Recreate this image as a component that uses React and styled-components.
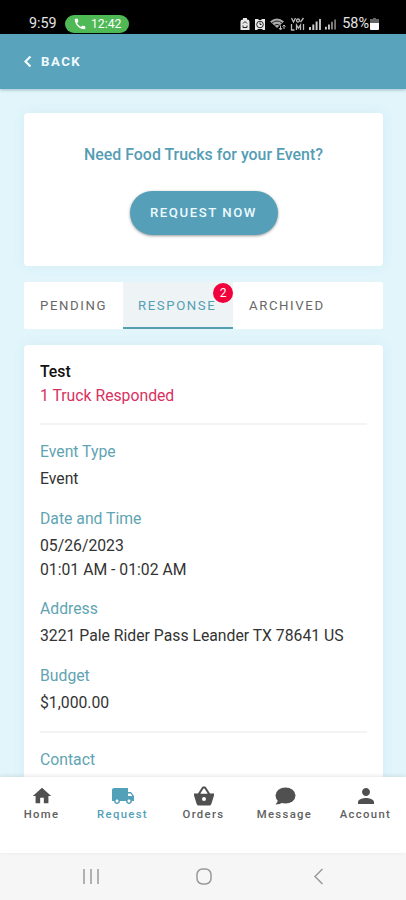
import React from 'react';
import styled, { createGlobalStyle } from 'styled-components';
import { MdHome, MdLocalShipping, MdPerson, MdCall } from 'react-icons/md';

const GlobalStyle = createGlobalStyle`
  * {
    box-sizing: border-box;
  }
  body {
    margin: 0;
    background: #e1f5fb;
    font-family: Roboto, sans-serif;
  }
`;

const Screen = styled.div`
  display: flex;
  flex-direction: column;
  width: 406px;
  height: 900px;
  overflow: hidden;
  background: #e1f5fb;
`;

const StatusBar = styled.div`
  display: flex;
  align-items: flex-end;
  flex: 0 0 34px;
  padding: 0 27px 2px 29px;
  background: #000;
  color: #e4e4e4;
`;

const Clock = styled.span`
  width: 36px;
  font-size: 14.3px;
  line-height: 17px;
`;

const CallPill = styled.div`
  display: flex;
  align-items: center;
  gap: 4px;
  width: 64px;
  height: 18px;
  margin-bottom: -1px;
  padding-left: 8px;
  border-radius: 9px;
  background: #4fb955;
  color: #fff;
  font-size: 12.2px;
  white-space: nowrap;
`;

const StatusIcons = styled.div`
  display: flex;
  align-items: center;
  gap: 4px;
  margin-left: auto;
  height: 17px;

  svg {
    flex: none;
  }
`;

const Battery = styled.span`
  display: flex;
  align-items: center;
  gap: 1px;
  margin-left: 2px;
  font-size: 14.4px;
`;

const Header = styled.div`
  position: relative;
  z-index: 1;
  display: flex;
  align-items: center;
  gap: 9px;
  flex: 0 0 55px;
  padding-left: 23px;
  background: #5aa3bd;
  box-shadow: 0 1px 3px rgba(40, 90, 110, 0.35);
  color: #f0fbff;
  font-size: 13.2px;
  font-weight: 700;
  letter-spacing: 1.5px;
`;

const Content = styled.div`
  flex: 1;
  min-height: 0;
  overflow: hidden;
  padding: 24px 23px 0 24px;
`;

const Card = styled.div`
  border-radius: 4px;
  background: #fff;
  box-shadow: 0 0 12px rgba(120, 190, 200, 0.12);
`;

const PromoCard = styled(Card)`
  display: flex;
  flex-direction: column;
  align-items: center;
  height: 153px;
  padding-top: 31px;
`;

const PromoTitle = styled.div`
  color: #559db4;
  font-size: 15.9px;
  font-weight: 500;
  line-height: 22px;
`;

const RequestButton = styled.button`
  width: 148px;
  height: 44px;
  margin-top: 25px;
  padding: 0 0 1px;
  border: none;
  border-radius: 22px;
  background: #559fb9;
  box-shadow: 0 1px 3px rgba(0, 0, 0, 0.4);
  color: #edfaff;
  font-family: inherit;
  font-size: 13.2px;
  font-weight: 500;
  letter-spacing: 1.55px;
`;

const Tabs = styled.div`
  display: flex;
  height: 47px;
  margin-top: 16px;
  border-radius: 2px;
  background: #fff;
`;

const Tab = styled.div`
  position: relative;
  width: ${props => props.$width}px;
  padding-left: ${props => (props.$active ? 15 : 16)}px;
  border-bottom: 2px solid ${props => (props.$active ? '#559fb3' : 'transparent')};
  background: ${props => (props.$active ? '#eef3f5' : 'transparent')};
  color: ${props => (props.$active ? '#559fb3' : '#676767')};
  font-size: 13.2px;
  line-height: 48px;
  letter-spacing: 1.6px;
`;

const Badge = styled.span`
  position: absolute;
  top: 1px;
  right: 0;
  width: 20px;
  height: 20px;
  border-radius: 50%;
  background: #f2003c;
  color: #fff;
  font-size: 12px;
  line-height: 20px;
  letter-spacing: 0;
  text-align: center;
`;

const DetailCard = styled(Card)`
  height: 500px;
  margin-top: 16px;
  padding: 15px 16px 0;
  font-size: 15.75px;
  line-height: 24px;
  color: #333;
`;

const Title = styled.div`
  color: #111;
  font-weight: 500;
`;

const Responded = styled.div`
  color: #d8315f;
`;

const Divider = styled.div`
  height: 2px;
  margin: 15px 0;
  background: #f4f4f4;
`;

const Field = styled.div`
  margin-bottom: 15.7px;
`;

const Label = styled.div`
  margin-bottom: 3px;
  color: #5fa4b2;
`;

const BottomNav = styled.div`
  position: relative;
  display: grid;
  grid-template-columns: repeat(5, 1fr);
  flex: 0 0 76px;
  padding: 8px 0 0 1px;
  background: #fff;
  box-shadow: 0 -1px 4px rgba(0, 0, 0, 0.1);
`;

const NavItem = styled.div`
  display: flex;
  flex-direction: column;
  align-items: center;
  color: ${props => (props.$active ? '#52a1b9' : '#606060')};
  font-size: 11.3px;
  font-weight: 500;
  line-height: 15px;
  letter-spacing: 1.35px;
`;

const NavIcon = styled.div`
  display: flex;
  align-items: center;
  justify-content: center;
  height: 22px;
  color: ${props => (props.$active ? '#52a1b9' : '#505050')};
`;

const SystemNav = styled.div`
  display: flex;
  align-items: center;
  flex: 0 0 47px;
  padding-left: 82px;
  gap: 95px;
  background: #f6f6f6;
`;

const BatterySaverIcon = () => (
  <svg width="10" height="14" viewBox="0 0 10 14">
    <path d="M3 1h4v1.500q2.500 0 2.500 2V13h-9V4.500q0-2 2.500-2z" fill="#e8e8e8" />
    <path d="M3 6.500l2-2 2 2M3 8.500v2h4v-2" fill="none" stroke="#222" />
  </svg>
);

const AlarmIcon = () => (
  <svg width="12" height="14" viewBox="0 0 12 14">
    <path d="M1 2h3l1 1h2l1-1h3v11H9l-1-1H4l-1 1H1z" fill="#e8e8e8" />
    <circle cx="6" cy="7.500" r="3.300" fill="none" stroke="#222" />
    <path d="M6 5.500v2h1.500" fill="none" stroke="#222" />
  </svg>
);

const WifiIcon = () => (
  <svg width="16" height="14" viewBox="0 0 16 14">
    <path d="M0 4.500Q7-1.500 14 4.500L7 11z" fill="#aaa" />
    <path d="M2 6q5-4 10 0M4.500 8.300q2.500-2 5 0" fill="none" stroke="#222" />
    <path d="M10.500 8.500v4M9 11l1.500 2L12 11M14 12V8M12.500 9.500L14 8l1.500 1.500" fill="none" stroke="#bbb" />
  </svg>
);

const VoWifiIcon = () => (
  <svg width="15" height="14" viewBox="0 0 14 14" fill="none" stroke="#bbb" strokeWidth="1.300">
    <path d="M1 1l2 4 2-4M6 3.500a1.500 1.500 0 1 0 3 0a1.500 1.500 0 1 0-3 0M10 5l3-4" />
    <path d="M1 7v6h3M6 13V8l2 3 2-3v5M13 7v6" />
  </svg>
);

const SignalIcon = ({ weak }) => (
  <svg width={weak ? 11 : 12} height="12" viewBox="0 0 12 12">
    <path d="M0 9h2v3H0z" fill="#ccc" />
    <path d="M3.300 6.500h2V12h-2z" fill="#ccc" />
    <path d="M6.600 3.500h2V12h-2z" fill={weak ? '#888' : '#ccc'} />
    <path d="M10 1h2v11h-2z" fill={weak ? '#777' : '#bbb'} />
  </svg>
);

const BatteryIcon = () => (
  <svg width="9" height="14" viewBox="0 0 9 14">
    <path d="M3 1h3v1h3v4H0V2h3z" fill="#666" />
    <path d="M0 6h9v6q0 1-1 1H1q-1 0-1-1z" fill="#fff" />
  </svg>
);

const BasketIcon = () => (
  <svg width="24" height="22" viewBox="0 0 24 22">
    <path d="M6.500 9.500l4.500-7h2l4.500 7" fill="none" stroke="#505050" strokeWidth="2" strokeLinejoin="round" />
    <path d="M2 8.500h20v2l-2.500 8q-.5 2-2 2h-11q-1.500 0-2-2L2 10.500z" fill="#505050" />
    <path d="M9 8.500L12 4.500 15 8.500z" fill="#fff" />
    <circle cx="12" cy="14" r="2" fill="#fff" />
  </svg>
);

const MessageIcon = () => (
  <svg width="22" height="20" viewBox="0 0 22 20">
    <ellipse cx="11.500" cy="9.500" rx="10" ry="8" fill="#505050" />
    <path d="M4 13q0 3-2.500 5.500 4.500 0 8-2.500z" fill="#505050" />
  </svg>
);

const navItems = [
  { label: 'Home', icon: <MdHome size={22} /> },
  { label: 'Request', icon: <MdLocalShipping size={24} />, active: true },
  { label: 'Orders', icon: <BasketIcon /> },
  { label: 'Message', icon: <MessageIcon /> },
  { label: 'Account', icon: <MdPerson size={24} /> }
];

const fields = [
  { label: 'Event Type', lines: ['Event'] },
  { label: 'Date and Time', lines: ['05/26/2023', '01:01 AM - 01:02 AM'] },
  { label: 'Address', lines: ['3221 Pale Rider Pass Leander TX 78641 US'] },
  { label: 'Budget', lines: ['$1,000.00'] }
];

const App = () => (
  <Screen>
    <GlobalStyle />
    <StatusBar>
      <Clock>9:59</Clock>
      <CallPill>
        <MdCall size={14} />
        12:42
      </CallPill>
      <StatusIcons>
        <BatterySaverIcon />
        <AlarmIcon />
        <WifiIcon />
        <VoWifiIcon />
        <SignalIcon />
        <SignalIcon weak />
        <Battery>
          58%
          <BatteryIcon />
        </Battery>
      </StatusIcons>
    </StatusBar>
    <Header>
      <svg width="9" height="13" viewBox="0 0 9 13" fill="none" stroke="currentColor" strokeWidth="2.200">
        <path d="M7.500 1.500l-5 5 5 5" />
      </svg>
      BACK
    </Header>
    <Content>
      <PromoCard>
        <PromoTitle>Need Food Trucks for your Event?</PromoTitle>
        <RequestButton>REQUEST NOW</RequestButton>
      </PromoCard>
      <Tabs>
        <Tab $width={99}>PENDING</Tab>
        <Tab $width={110} $active>
          RESPONSE
          <Badge>2</Badge>
        </Tab>
        <Tab $width={110}>ARCHIVED</Tab>
      </Tabs>
      <DetailCard>
        <Title>Test</Title>
        <Responded>1 Truck Responded</Responded>
        <Divider />
        {fields.map(field => (
          <Field key={field.label}>
            <Label>{field.label}</Label>
            {field.lines.map(line => <div key={line}>{line}</div>)}
          </Field>
        ))}
        <Divider />
        <Label>Contact</Label>
      </DetailCard>
    </Content>
    <BottomNav>
      {navItems.map(item => (
        <NavItem key={item.label} $active={item.active}>
          <NavIcon $active={item.active}>{item.icon}</NavIcon>
          {item.label}
        </NavItem>
      ))}
    </BottomNav>
    <SystemNav>
      <svg width="18" height="17" viewBox="0 0 18 17" stroke="#a0a0a0" strokeWidth="1.600">
        <path d="M2 1v15M9 1v15M16 1v15" />
      </svg>
      <svg width="18" height="17" viewBox="0 0 18 17" fill="none" stroke="#999" strokeWidth="1.500">
        <rect x="2" y="1" width="14" height="15" rx="5.500" />
      </svg>
      <svg width="18" height="17" viewBox="0 0 18 17" fill="none" stroke="#999" strokeWidth="1.500">
        <path d="M14.500 1L7 8.500 14.500 16" />
      </svg>
    </SystemNav>
  </Screen>
);

export default App;
